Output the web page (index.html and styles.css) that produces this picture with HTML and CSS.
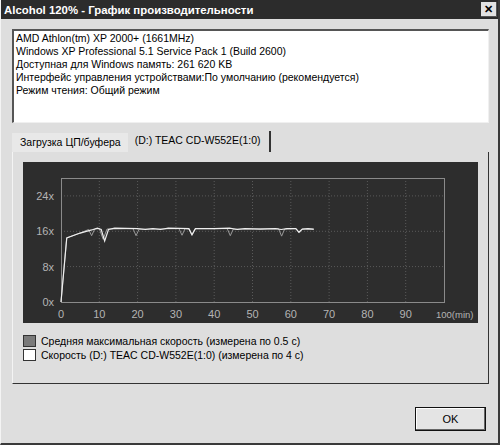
FILE: index.html
```html
<html lang="ru">
    <head>
        <meta charset="UTF-8">
        <title>Alcohol 120% - График производительности</title>
        <link rel="stylesheet" href="styles.css">
    </head>
    <body>
        <div class="window">
            <!--title bar-->
            <div class="titlebar">
                <span class="title">Alcohol 120% - График производительности</span>
                <span class="close">✕</span>
            </div>

            <div class="content">
                <!--system info box-->
                <div class="info">
                    <div>AMD Athlon(tm) XP 2000+ (1661MHz)</div>
                    <div>Windows XP Professional 5.1 Service Pack 1 (Build 2600)</div>
                    <div>Доступная для Windows память: 261 620 KB</div>
                    <div>Интерфейс управления устройствами:По умолчанию (рекомендуется)</div>
                    <div>Режим чтения: Общий режим</div>
                </div>

                <!--tabs-->
                <div class="tabs">
                    <div class="tab">Загрузка ЦП/буфера</div>
                    <div class="tab active">(D:) TEAC CD-W552E(1:0)</div>
                </div>

                <div class="panel">
                    <div class="chart">
                        <svg width="454" height="161" viewBox="0 0 454 161">
                            <!--grid-->
                            <g class="grid">
                                <line x1="38" y1="33.9" x2="421" y2="33.9" />
                                <line x1="38" y1="69.3" x2="421" y2="69.3" />
                                <line x1="38" y1="104.6" x2="421" y2="104.6" />
                                <line x1="76.3" y1="16" x2="76.3" y2="140" />
                                <line x1="114.6" y1="16" x2="114.6" y2="140" />
                                <line x1="152.9" y1="16" x2="152.9" y2="140" />
                                <line x1="191.2" y1="16" x2="191.2" y2="140" />
                                <line x1="229.5" y1="16" x2="229.5" y2="140" />
                                <line x1="267.8" y1="16" x2="267.8" y2="140" />
                                <line x1="306.1" y1="16" x2="306.1" y2="140" />
                                <line x1="344.4" y1="16" x2="344.4" y2="140" />
                                <line x1="382.7" y1="16" x2="382.7" y2="140" />
                            </g>
                            <rect class="frame" x="38.5" y="16.5" width="383" height="124" />

                            <!--axis labels-->
                            <g class="ylabels">
                                <text x="31" y="38">24x</text>
                                <text x="31" y="73">16x</text>
                                <text x="31" y="109">8x</text>
                                <text x="31" y="144">0x</text>
                            </g>
                            <g class="xlabels">
                                <text x="38" y="156">0</text>
                                <text x="76.3" y="156">10</text>
                                <text x="114.6" y="156">20</text>
                                <text x="152.9" y="156">30</text>
                                <text x="191.2" y="156">40</text>
                                <text x="229.5" y="156">50</text>
                                <text x="267.8" y="156">60</text>
                                <text x="306.1" y="156">70</text>
                                <text x="344.4" y="156">80</text>
                                <text x="382.7" y="156">90</text>
                                <text class="last" x="413" y="156">100(min)</text>
                            </g>

                            <!--data (minutes, speed)-->
                            <g transform="translate(38,140) scale(3.83,-4.42)">
                                <polyline class="avg" points="0,0 1.5,14.5 5,15.6 7.2,16.4 8,15 8.8,16.5 10,16.6 11,14.2 12,16.5 18.8,16.6 19.6,15 20.4,16.5 30.8,16.6 31.6,15.1 32.4,16.6 33.4,16.5 34.2,15.1 35,16.6 43.4,16.6 44.2,15 45,16.5 56.8,16.6 57.6,14.9 58.4,16.5 61.4,16.6 62.2,15.6 63,16.5 66,16.4" />
                                <polyline class="speed" points="0,0 1.5,14.5 5,15.6 8,16.3 9.5,16.7 10.5,16.4 11.4,13.8 12.4,16.4 14,16.7 20,16.6 22,16.4 24,16.6 26,16.4 28,16.7 33.4,16.6 34.2,15.2 35.1,16.6 40,16.6 44,16.7 46,16.4 48,16.6 52,16.5 56,16.6 57.5,16.4 59,16.6 61.3,16.6 62.1,15.8 63,16.5 64.5,16.6 66,16.5" />
                            </g>
                        </svg>
                    </div>

                    <!--legend-->
                    <div class="legend">
                        <div class="legend-row"><span class="swatch filled"></span>Средняя максимальная скорость (измерена по 0.5 с)</div>
                        <div class="legend-row"><span class="swatch"></span>Скорость (D:) TEAC CD-W552E(1:0) (измерена по 4 с)</div>
                    </div>
                </div>

                <div class="buttons">
                    <button class="ok">OK</button>
                </div>
            </div>
        </div>
    </body>
</html>
```

FILE: styles.css
```css
body {
    margin: 0;
    padding: 0;
    font-family: 'Liberation Sans', Arial, sans-serif;
    font-size: 10.5px;
    color: #000;
    background-color: #dedede; /*dialog gray*/
}

.window {
    width: 500px;
    height: 445px;
    box-sizing: border-box;
    border-right: 2px solid #3a3a3a;
    border-bottom: 2px solid #3a3a3a;
    border-left: 1px solid #f4f4f4;
    display: flex;
    flex-direction: column;
}

.titlebar {
    height: 19px;
    background-color: #2c2c2c;
    color: #fff;
    display: flex;
    align-items: center;
    justify-content: space-between;
    padding: 0 1px 0 3px;
}

.title {
    font-weight: bold;
    font-size: 11.4px;
}

.close {
    width: 15px;
    height: 14px;
    background-color: #e2e2e2;
    color: #000;
    font-size: 11px;
    font-weight: bold;
    line-height: 14px;
    text-align: center;
    border-right: 1px solid #555;
    border-bottom: 1px solid #555;
}

.content {
    padding: 10px 9px 0 11px;
    display: flex;
    flex-direction: column;
}

.info {
    height: 94px;
    box-sizing: border-box;
    background-color: #fff;
    border-top: 2px solid #555;
    border-left: 2px solid #555;
    border-right: 1px solid #f0f0f0;
    border-bottom: 1px solid #f0f0f0;
    padding: 1px 2px;
    line-height: 13px;
}

.tabs {
    display: flex;
    margin-top: 9px;
    height: 20px;
    align-items: flex-end;
}

.tab {
    height: 19px;
    line-height: 19px;
    padding: 0 7px 0 8px;
    background-color: #e8e8e8;
}

.tab.active {
    height: 21px;
    background-color: #dedede;
    border-right: 2px solid #333;
    padding: 0 8px 0 7px;
}

.panel {
    height: 232px;
    box-sizing: border-box;
    border-left: 1px solid #f4f4f4;
    border-right: 1px solid #333;
    border-bottom: 1px solid #333;
    padding: 10px 10px 0 10px;
}

.chart {
    height: 161px;
    background-color: #2d2d2d;
}

.chart svg {
    display: block;
}

.grid line {
    stroke: #5a5a5a;
    stroke-width: 1;
    stroke-dasharray: 1 2; /*dotted grid*/
}

.frame {
    fill: none;
    stroke: #8a8a8a;
}

.chart text {
    fill: #b4b4b4;
    font-family: 'Liberation Sans', Arial, sans-serif;
    font-size: 11px;
}

.ylabels text {
    text-anchor: end;
}

.xlabels text {
    text-anchor: middle;
}

.xlabels text.last {
    text-anchor: start;
    font-size: 9.5px;
}

.avg {
    fill: none;
    stroke: #9a9a9a;
    stroke-width: 1;
    vector-effect: non-scaling-stroke;
}

.speed {
    fill: none;
    stroke: #eeeeee;
    stroke-width: 1.2;
    vector-effect: non-scaling-stroke;
}

.legend {
    margin-top: 11px;
    display: flex;
    flex-direction: column;
    gap: 1px;
}

.legend-row {
    display: flex;
    align-items: center;
    height: 13px;
}

.swatch {
    width: 11px;
    height: 10px;
    border: 1px solid #333;
    background-color: #fff;
    margin-right: 5px;
}

.swatch.filled {
    background-color: #7a7a7a;
}

.buttons {
    display: flex;
    justify-content: flex-end;
    margin-top: 23px;
    padding-right: 3px;
}

.ok {
    width: 71px;
    height: 24px;
    font-family: 'Liberation Sans', Arial, sans-serif;
    font-size: 11px;
    background-color: #e4e4e4;
    border: 1px solid #111;
    box-shadow: inset -1px -1px 0 #666, inset 1px 1px 0 #fff;
    padding: 0;
}
```
